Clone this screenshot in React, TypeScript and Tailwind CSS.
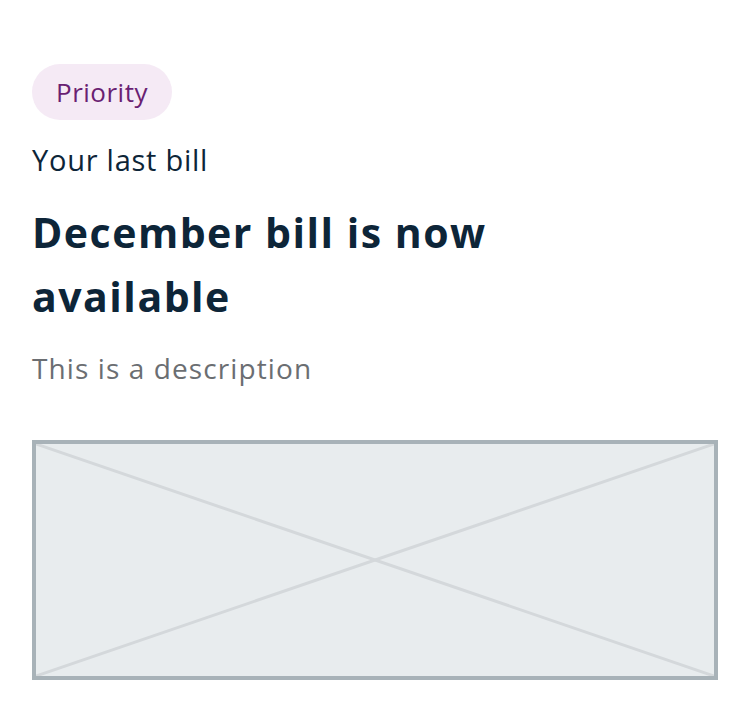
export default function App() {
  return (
    <div className="min-h-screen bg-white px-8 pt-16" style={{ fontFamily: '"Open Sans", Lato, sans-serif' }}>
      <span className="inline-flex h-14 items-center rounded-full bg-[#f5eaf5] px-6 text-[26px] tracking-[0.5px] text-[#6a1f72]">
        Priority
      </span>
      <p className="mt-5 text-[29px] leading-10 tracking-[0.75px] text-[#0d2538]">Your last bill</p>
      <h1 className="mt-5 max-w-[520px] text-[41px] font-bold leading-[64px] tracking-[1.5px] text-[#0d2538]">
        December bill is now available
      </h1>
      <p className="mt-5 text-[28px] leading-10 tracking-[1.1px] text-[#6b6e72]">This is a description</p>
      <div className="mt-[52px] h-[240px] w-full border-4 border-[#a8b2b8] bg-[#e8ecee]">
        <svg className="h-full w-full" viewBox="0 0 100 100" preserveAspectRatio="none">
          <line x1="0" y1="0" x2="100" y2="100" stroke="#d4d8db" strokeWidth="3" vectorEffect="non-scaling-stroke" />
          <line x1="100" y1="0" x2="0" y2="100" stroke="#d4d8db" strokeWidth="3" vectorEffect="non-scaling-stroke" />
        </svg>
      </div>
    </div>
  );
}
